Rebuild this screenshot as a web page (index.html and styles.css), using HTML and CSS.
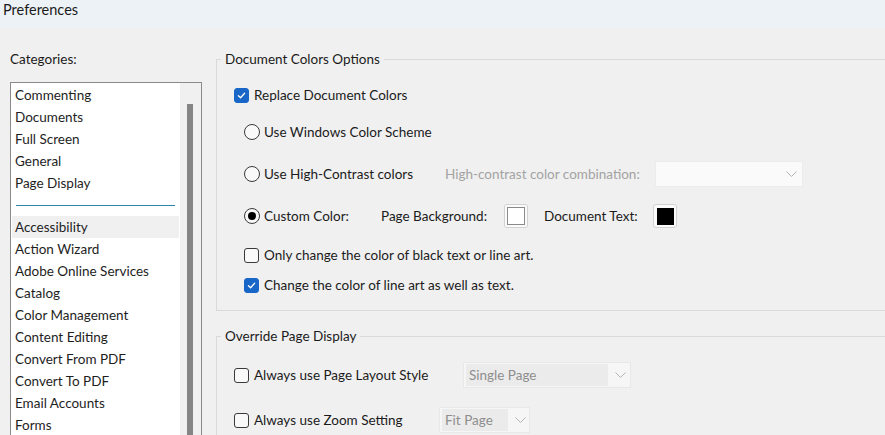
FILE: index.html
```html
<!DOCTYPE html>
<html>
<head>
<meta charset="utf-8">
<title>Preferences</title>
<link rel="stylesheet" href="styles.css">
</head>
<body>
<div class="titlebar">Preferences</div>
<div class="main">
  <div class="left">
    <div class="cat-label">Categories:</div>
    <div class="listbox">
      <ul class="items">
        <li>Commenting</li>
        <li>Documents</li>
        <li>Full Screen</li>
        <li>General</li>
        <li>Page Display</li>
        <li class="sep"><span class="sepline"></span></li>
        <li class="sel">Accessibility</li>
        <li>Action Wizard</li>
        <li>Adobe Online Services</li>
        <li>Catalog</li>
        <li>Color Management</li>
        <li>Content Editing</li>
        <li>Convert From PDF</li>
        <li>Convert To PDF</li>
        <li>Email Accounts</li>
        <li>Forms</li>
      </ul>
      <div class="track"><div class="thumb"></div></div>
    </div>
  </div>
  <div class="right">
    <fieldset class="group g1">
      <legend>Document Colors Options</legend>
      <div class="row r1 in1">
        <span class="cb on"><svg viewBox="0 0 15 15" width="15" height="15"><path d="M4.4 7.7 L6.6 9.8 L10.6 5.3" fill="none" stroke="#fff" stroke-width="1.3" stroke-linecap="round" stroke-linejoin="round"/></svg></span>
        <span class="lbl">Replace Document Colors</span>
      </div>
      <div class="row r2 in2">
        <span class="rb"></span>
        <span class="lbl">Use Windows Color Scheme</span>
      </div>
      <div class="row r3 in2">
        <span class="rb"></span>
        <span class="lbl w-hc">Use High-Contrast colors</span>
        <span class="lbl dis w-hcl">High-contrast color combination:</span>
        <span class="dd dd-hc"><svg class="chev" viewBox="0 0 11 6" width="11" height="6"><path d="M0.5 0.5 L5.5 5.5 L10.5 0.5" fill="none" stroke="#b4b4b4" stroke-width="1"/></svg></span>
      </div>
      <div class="row r4 in2">
        <span class="rb on"></span>
        <span class="lbl w-cc">Custom Color:</span>
        <span class="lbl w-pb">Page Background:</span>
        <span class="swatch"><span class="sw-in white"></span></span>
        <span class="lbl w-dt">Document Text:</span>
        <span class="swatch"><span class="sw-in black"></span></span>
      </div>
      <div class="row r5 in2">
        <span class="cb"></span>
        <span class="lbl">Only change the color of black text or line art.</span>
      </div>
      <div class="row r6 in2">
        <span class="cb on"><svg viewBox="0 0 15 15" width="15" height="15"><path d="M4.4 7.7 L6.6 9.8 L10.6 5.3" fill="none" stroke="#fff" stroke-width="1.3" stroke-linecap="round" stroke-linejoin="round"/></svg></span>
        <span class="lbl">Change the color of line art as well as text.</span>
      </div>
    </fieldset>
    <fieldset class="group g2">
      <legend>Override Page Display</legend>
      <div class="row ra in1">
        <span class="cb"></span>
        <span class="lbl w-pl">Always use Page Layout Style</span>
        <span class="dd dd-pl"><span class="dd-field">Single Page</span><svg class="chev" viewBox="0 0 11 6" width="11" height="6"><path d="M0.5 0.5 L5.5 5.5 L10.5 0.5" fill="none" stroke="#b4b4b4" stroke-width="1"/></svg></span>
      </div>
      <div class="row rb2 in1">
        <span class="cb"></span>
        <span class="lbl w-zs">Always use Zoom Setting</span>
        <span class="dd dd-zs"><span class="dd-field">Fit Page</span><svg class="chev" viewBox="0 0 11 6" width="11" height="6"><path d="M0.5 0.5 L5.5 5.5 L10.5 0.5" fill="none" stroke="#b4b4b4" stroke-width="1"/></svg></span>
      </div>
    </fieldset>
  </div>
</div>
</body>
</html>
```
FILE: styles.css
```css
html, body {
  margin: 0;
  padding: 0;
}
body {
  width: 885px;
  height: 435px;
  overflow: hidden;
  background: #f0f0f0;
  font-family: Lato, "Open Sans", "Liberation Sans", sans-serif;
  font-size: 13.5px;
  color: #1b1b1b;
}
.titlebar {
  height: 28px;
  background: #edf2f6;
  font-size: 14.5px;
  line-height: 20px;
  padding-left: 3px;
  box-sizing: border-box;
}
.main {
  display: flex;
  align-items: flex-start;
  padding-top: 22px;
}
.left {
  margin-left: 10px;
  width: 192px;
  flex: none;
}
.cat-label {
  line-height: 18px;
  height: 18px;
}
.listbox {
  margin-top: 14px;
  width: 192px;
  height: 353px;
  box-sizing: border-box;
  border: 1px solid #8a8a8a;
  border-bottom: none;
  background: #fff;
  display: flex;
  overflow: hidden;
}
.items {
  list-style: none;
  margin: 0;
  padding: 1px 0 0 0;
  width: 169px;
  flex: none;
}
.items li {
  height: 22px;
  line-height: 22px;
  margin: 0 1px;
  padding-left: 3px;
  white-space: nowrap;
  color: #1e1e1e;
}
.items li.sel {
  background: #f0f0f0;
}
.items li.sep {
  display: flex;
  align-items: center;
  padding: 0 4px;
}
.sepline {
  display: block;
  width: 100%;
  height: 1px;
  background: #2a86a8;
}
.track {
  width: 21px;
  flex: none;
  background: #f0f0f0;
  padding-top: 21px;
  box-sizing: border-box;
  display: flex;
  flex-direction: column;
}
.thumb {
  width: 6px;
  margin-left: 7px;
  flex: 1;
  background: #858585;
}
.right {
  margin-left: 14px;
  width: 700px;
  flex: none;
}
.group {
  margin: 0;
  padding: 0 0 12px 0;
  border: 1px solid #dadada;
  min-width: 0;
}
.group legend {
  padding: 0 4px;
  margin-left: 4px;
  line-height: 18px;
  font-size: 13.5px;
}
.g2 {
  margin-top: 16px;
}
.row {
  display: flex;
  align-items: center;
  height: 26px;
  white-space: nowrap;
}
.in1 { padding-left: 17px; }
.in2 { padding-left: 27px; }
.r1 { margin-top: 14px; }
.r2 { margin-top: 11px; }
.r3 { margin-top: 16px; }
.r4 { margin-top: 16px; }
.r5 { margin-top: 13px; }
.r6 { margin-top: 4px; }
.ra { margin-top: 17px; }
.rb2 { margin-top: 19px; }
.cb {
  width: 15px;
  height: 15px;
  box-sizing: border-box;
  border: 1px solid #3a3a3a;
  border-radius: 3px;
  background: #f9f9f9;
  flex: none;
  margin-right: 5px;
  display: flex;
}
.cb.on {
  background: #1866c7;
  border-color: #1866c7;
}
.cb.on svg {
  margin: -1px;
}
.rb {
  width: 16px;
  height: 16px;
  box-sizing: border-box;
  border: 1px solid #3a3a3a;
  border-radius: 50%;
  background: #f9f9f9;
  flex: none;
  margin-right: 4px;
  display: flex;
  align-items: center;
  justify-content: center;
}
.rb.on::after {
  content: "";
  width: 8px;
  height: 8px;
  border-radius: 50%;
  background: #000;
}
.lbl {
  flex: none;
}
.dis {
  color: #a3a3a3;
}
.w-hc { width: 181px; }
.w-hcl { width: 210px; }
.w-cc { width: 117px; }
.w-pb { width: 123px; }
.w-dt { width: 109px; }
.w-pl { width: 209px; }
.w-zs { width: 185px; }
.dd {
  flex: none;
  height: 26px;
  box-sizing: border-box;
  display: flex;
  align-items: center;
  background: #f6f6f6;
  border: 1px solid #e8e8e8;
}
.dd-hc {
  width: 148px;
  background: #fafafa;
  border-color: #ececec;
  justify-content: flex-end;
  padding-right: 5px;
}
.dd-field {
  height: 22px;
  margin-left: 2px;
  background: #ebebeb;
  color: #8e8e8e;
  line-height: 22px;
  padding-left: 3px;
  box-sizing: border-box;
}
.dd-pl { width: 168px; }
.dd-pl .dd-field { width: 142px; }
.dd-zs { width: 91px; }
.dd-zs .dd-field { width: 66px; }
.dd .chev {
  margin-left: 7px;
}
.dd-hc .chev {
  margin-left: 0;
}
.swatch {
  flex: none;
  width: 24px;
  height: 24px;
  box-sizing: border-box;
  border: 1px solid #d2d2d2;
  border-radius: 3px;
  background: #fbfbfb;
  display: flex;
  align-items: center;
  justify-content: center;
  margin-right: 16px;
}
.sw-in {
  width: 18px;
  height: 18px;
  box-sizing: border-box;
}
.sw-in.white {
  background: #fff;
  border: 1px solid #8a8a8a;
}
.sw-in.black {
  background: #000;
  width: 17px;
  height: 17px;
}
```
